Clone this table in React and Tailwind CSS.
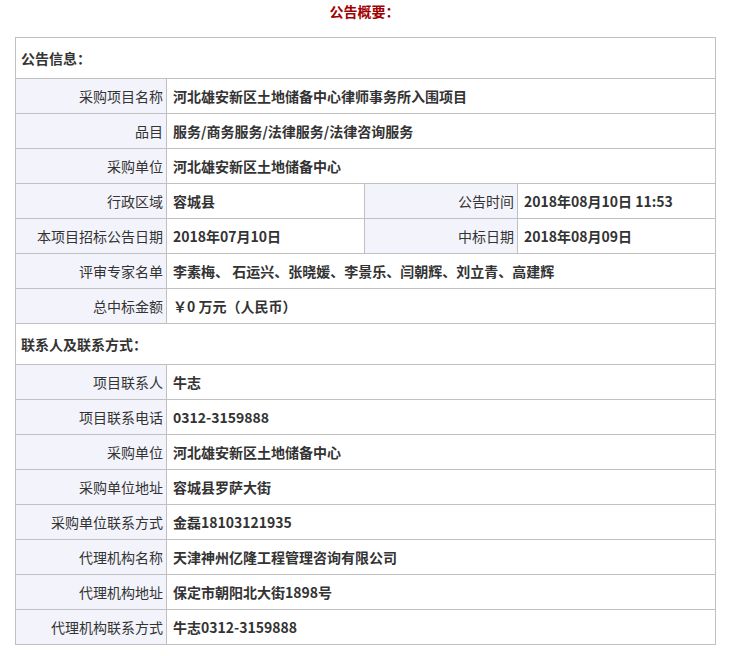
import React from "react";

const font = { fontFamily: '"Noto Sans CJK SC", "Noto Sans", sans-serif' };

function Label({ children }) {
  return (
    <td className="border border-[#c0c0c0] bg-[#f3f3fb] pr-[3px] text-right font-normal text-[#333]">
      {children}
    </td>
  );
}

function Value({ children, span = 3 }) {
  return (
    <td
      colSpan={span}
      className="border border-[#c0c0c0] pl-[6px] font-bold text-[#333]"
    >
      {children}
    </td>
  );
}

function Header({ children }) {
  return (
    <tr className="h-[41px]">
      <td
        colSpan={4}
        className="border border-[#c0c0c0] pl-[5px] font-bold text-[#333]"
      >
        {children}
      </td>
    </tr>
  );
}

function Row({ label, value }) {
  return (
    <tr className="h-[35px]">
      <Label>{label}</Label>
      <Value>{value}</Value>
    </tr>
  );
}

export default function App() {
  const info = [
    ["采购项目名称", "河北雄安新区土地储备中心律师事务所入围项目"],
    ["品目", "服务/商务服务/法律服务/法律咨询服务"],
    ["采购单位", "河北雄安新区土地储备中心"],
  ];
  const contacts = [
    ["项目联系人", "牛志"],
    ["项目联系电话", "0312-3159888"],
    ["采购单位", "河北雄安新区土地储备中心"],
    ["采购单位地址", "容城县罗萨大街"],
    ["采购单位联系方式", "金磊18103121935"],
    ["代理机构名称", "天津神州亿隆工程管理咨询有限公司"],
    ["代理机构地址", "保定市朝阳北大街1898号"],
    ["代理机构联系方式", "牛志0312-3159888"],
  ];

  return (
    <div className="h-[656px] w-[729px] bg-white text-[14px] leading-none" style={font}>
      <div className="flex h-[37px] items-start justify-center pt-[4px] text-[14px] font-bold text-[#a00000]">
        公告概要：
      </div>
      <table className="ml-[15px] w-[700px] table-fixed border-collapse">
        <colgroup>
          <col className="w-[151px]" />
          <col className="w-[198px]" />
          <col className="w-[153px]" />
          <col className="w-[198px]" />
        </colgroup>
        <tbody>
          <Header>公告信息：</Header>
          {info.map(([l, v]) => (
            <Row key={l} label={l} value={v} />
          ))}
          <tr className="h-[35px]">
            <Label>行政区域</Label>
            <Value span={1}>容城县</Value>
            <Label>公告时间</Label>
            <Value span={1}>2018年08月10日 11:53</Value>
          </tr>
          <tr className="h-[35px]">
            <Label>本项目招标公告日期</Label>
            <Value span={1}>2018年07月10日</Value>
            <Label>中标日期</Label>
            <Value span={1}>2018年08月09日</Value>
          </tr>
          <Row label="评审专家名单" value="李素梅、 石运兴、张晓媛、李景乐、闫朝辉、刘立青、高建辉" />
          <Row label="总中标金额" value="￥0 万元（人民币）" />
          <Header>联系人及联系方式：</Header>
          {contacts.map(([l, v], i) => (
            <Row key={i} label={l} value={v} />
          ))}
        </tbody>
      </table>
    </div>
  );
}
